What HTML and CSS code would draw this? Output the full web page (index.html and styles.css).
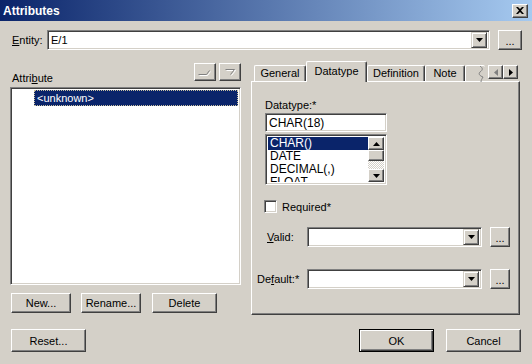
FILE: index.html
```html
<!DOCTYPE html>
<html lang="en">
<head>
<meta charset="UTF-8">
<title>Attributes</title>
<link rel="stylesheet" href="styles.css">
</head>
<body>
<div class="window">
  <div class="titlebar">
    <span class="title">Attributes</span>
    <span class="close-btn">
      <svg width="8" height="7" viewBox="0 0 8 7"><path d="M0 0h2l2 2 2-2h2L5 3.5 8 7H6L4 5 2 7H0l3-3.5z" fill="#000"/></svg>
    </span>
  </div>

  <div class="content">
    <div class="entity-row">
      <label class="lbl entity-lbl"><u>E</u>ntity:</label>
      <div class="field combo grow">
        <span class="combo-text">E/1</span>
        <span class="drop-btn"><svg width="7" height="4" viewBox="0 0 7 4"><path d="M0 0h7L3.5 4z" fill="#000"/></svg></span>
      </div>
      <button class="btn dots entity-dots">...</button>
    </div>

    <div class="main">
      <div class="left-col">
        <div class="attr-head">
          <span class="lbl attr-lbl">Attri<u>b</u>ute</span>
          <div class="move-btns">
            <span class="btn move-btn">
              <svg width="14" height="9" viewBox="0 0 14 9"><path d="M1.5 7.5h8l3-4" stroke="#fff" fill="none"/><path d="M0.5 6.5h8l3-4" stroke="#808080" fill="none"/></svg>
            </span>
            <span class="btn move-btn">
              <svg width="14" height="9" viewBox="0 0 14 9"><path d="M3.5 2.5h9l-4 5" stroke="#fff" fill="none"/><path d="M2.5 1.5h9l-4 5" stroke="#808080" fill="none"/></svg>
            </span>
          </div>
        </div>
        <div class="field attr-list">
          <div class="attr-item selected">&lt;unknown&gt;</div>
        </div>
        <div class="btn-row">
          <button class="btn btn-new">New...</button>
          <button class="btn btn-rename">Rename...</button>
          <button class="btn btn-delete">Delete</button>
        </div>
      </div>

      <div class="right-col">
        <div class="tabs">
          <span class="tab tab-general">General</span>
          <span class="tab tab-datatype active">Datatype</span>
          <span class="tab tab-definition">Definition</span>
          <span class="tab tab-note">Note</span>
          <span class="tab tab-torn">
            <svg width="8" height="16" viewBox="0 0 8 16"><path d="M3 0c3 2 3 4 0 6 -2 2 0 4 3 5 -1 2 -2 3 -2 5" stroke="#808080" fill="none"/></svg>
          </span>
          <div class="tab-scroll">
            <span class="btn scroll-btn"><svg width="4" height="7" viewBox="0 0 4 7"><path d="M4 0v7L0 3.5z" fill="#808080"/></svg></span>
            <span class="btn scroll-btn"><svg width="4" height="7" viewBox="0 0 4 7"><path d="M0 0v7l4-3.5z" fill="#000"/></svg></span>
          </div>
        </div>

        <div class="panel">
          <div class="dt-section">
            <div class="lbl dt-lbl">Datatype:*</div>
            <div class="field dt-input">CHAR(18)</div>
            <div class="field dt-list">
              <div class="dt-items">
                <div class="dt-item selected">CHAR()</div>
                <div class="dt-item">DATE</div>
                <div class="dt-item">DECIMAL(,)</div>
                <div class="dt-item">FLOAT</div>
              </div>
              <div class="vscroll">
                <span class="btn sb-btn"><svg width="7" height="4" viewBox="0 0 7 4"><path d="M0 4h7L3.5 0z" fill="#000"/></svg></span>
                <span class="btn sb-thumb"></span>
                <span class="sb-track"></span>
                <span class="btn sb-btn"><svg width="7" height="4" viewBox="0 0 7 4"><path d="M0 0h7L3.5 4z" fill="#000"/></svg></span>
              </div>
            </div>
          </div>

          <div class="check-row">
            <span class="field checkbox"></span>
            <span class="lbl">Required*</span>
          </div>

          <div class="form-row valid-row">
            <label class="lbl row-lbl valid-lbl"><u>V</u>alid:</label>
            <div class="field combo row-combo">
              <span class="drop-btn"><svg width="7" height="4" viewBox="0 0 7 4"><path d="M0 0h7L3.5 4z" fill="#000"/></svg></span>
            </div>
            <button class="btn dots row-dots">...</button>
          </div>

          <div class="form-row default-row">
            <label class="lbl row-lbl">De<u>f</u>ault:*</label>
            <div class="field combo row-combo">
              <span class="drop-btn"><svg width="7" height="4" viewBox="0 0 7 4"><path d="M0 0h7L3.5 4z" fill="#000"/></svg></span>
            </div>
            <button class="btn dots row-dots">...</button>
          </div>
        </div>
      </div>
    </div>

    <div class="footer">
      <button class="btn btn-reset">Reset...</button>
      <button class="btn btn-ok">OK</button>
      <button class="btn btn-cancel">Cancel</button>
    </div>
  </div>
</div>
</body>
</html>
```

FILE: styles.css
```css
* {
  box-sizing: border-box;
}
body {
  margin: 0;
  background-color: #d4d0c8;
  font-family: "Liberation Sans", Arial, sans-serif;
  font-size: 11px;
  color: #000000;
}
.window {
  width: 532px;
  height: 364px;
  display: flex;
  flex-direction: column;
}

/* title bar */
.titlebar {
  height: 21px;
  background: linear-gradient(to right, #0a246a, #a6caf0);
  display: flex;
  align-items: center;
  padding: 0 4px 0 3px;
}
.title {
  flex: 1;
  color: #ffffff;
  font-weight: bold;
  font-size: 12px;
}
.close-btn {
  width: 16px;
  height: 14px;
  background-color: #d4d0c8;
  border: 1px solid;
  border-color: #ffffff #404040 #404040 #ffffff;
  box-shadow: inset -1px -1px #808080;
  display: flex;
  align-items: center;
  justify-content: center;
}

.content {
  flex: 1;
  display: flex;
  flex-direction: column;
  padding: 9px 10px 0 10px;
}

/* shared controls */
.lbl {
  line-height: 14px;
  white-space: nowrap;
}
.field {
  background-color: #ffffff;
  border: 1px solid;
  border-color: #808080 #ffffff #ffffff #808080;
  box-shadow: inset 1px 1px #404040, inset -1px -1px #d4d0c8;
}
.btn {
  font-family: inherit;
  font-size: 11px;
  color: #000000;
  background-color: #d4d0c8;
  border: 1px solid;
  border-color: #ffffff #404040 #404040 #ffffff;
  box-shadow: inset -1px -1px #808080;
  padding: 0;
  display: flex;
  align-items: center;
  justify-content: center;
}
.combo {
  height: 20px;
  display: flex;
  align-items: center;
  padding: 2px;
}
.combo-text {
  flex: 1;
  padding-left: 1px;
}
.drop-btn {
  width: 16px;
  height: 16px;
  margin-left: auto;
  background-color: #d4d0c8;
  border: 1px solid;
  border-color: #d4d0c8 #404040 #404040 #d4d0c8;
  box-shadow: inset 1px 1px #ffffff, inset -1px -1px #808080;
  display: flex;
  align-items: center;
  justify-content: center;
}
.dots {
  height: 20px;
  align-items: flex-end;
  padding-bottom: 4px;
  line-height: 8px;
}

/* entity row */
.entity-row {
  display: flex;
  align-items: center;
  height: 20px;
}
.entity-lbl {
  width: 35px;
  margin-left: 2px;
}
.grow {
  flex: 1;
}
.entity-dots {
  width: 24px;
  margin-left: 8px;
}

/* main area */
.main {
  display: flex;
  gap: 10px;
  margin-top: 11px;
}
.left-col {
  width: 231px;
}
.attr-head {
  height: 20px;
  display: flex;
  align-items: flex-end;
  margin-bottom: 6px;
}
.attr-lbl {
  padding-left: 2px;
  margin-bottom: -4px;
}
.move-btns {
  margin-left: auto;
  display: flex;
  gap: 3px;
}
.move-btn {
  width: 22px;
  height: 18px;
}
.attr-list {
  height: 198px;
  padding: 2px 2px 0 2px;
}
.attr-item {
  height: 16px;
  line-height: 14px;
  margin-left: 21px;
  padding-left: 2px;
}
.attr-item.selected {
  background-color: #0a246a;
  color: #ffffff;
  border: 1px dotted #c8c0a0;
}
.btn-row {
  display: flex;
  margin-top: 8px;
}
.btn-row .btn {
  height: 20px;
}
.btn-new {
  width: 60px;
  margin-left: 1px;
}
.btn-rename {
  width: 60px;
  margin-left: 10px;
}
.btn-delete {
  width: 65px;
  margin-left: 11px;
}

/* tabs */
.right-col {
  width: 269px;
}
.tabs {
  height: 20px;
  display: flex;
  align-items: flex-end;
  padding-left: 3px;
}
.tab {
  height: 16px;
  line-height: 15px;
  text-align: center;
  border: 1px solid;
  border-bottom: none;
  border-color: #ffffff #404040 #404040 #ffffff;
  box-shadow: inset -1px 0 #808080;
  border-radius: 2px 2px 0 0;
}
.tab-general {
  width: 52px;
}
.tab-datatype {
  width: 61px;
}
.tab-definition {
  width: 58px;
}
.tab-note {
  width: 40px;
}
.tab-torn {
  width: 20px;
  border-right: none;
  box-shadow: none;
  display: flex;
  justify-content: flex-end;
}
.tab.active {
  position: relative;
  height: 21px;
  line-height: 19px;
  margin-bottom: -1px;
  background-color: #d4d0c8;
  z-index: 1;
}
.tab-scroll {
  display: flex;
  margin-left: auto;
  margin-right: 2px;
  margin-bottom: 2px;
}
.scroll-btn {
  width: 15px;
  height: 14px;
}

/* panel */
.panel {
  height: 234px;
  border: 1px solid;
  border-color: #ffffff #404040 #404040 #ffffff;
  box-shadow: inset -1px -1px #808080;
  padding: 16px 0 0 5px;
}
.dt-section {
  padding-left: 8px;
}
.dt-input {
  width: 122px;
  height: 19px;
  margin-top: 1px;
  padding: 2px 3px;
  line-height: 14px;
  font-size: 12px;
}
.dt-list {
  width: 122px;
  height: 51px;
  margin-top: 2px;
  padding: 2px;
  display: flex;
  overflow: hidden;
}
.dt-items {
  flex: 1;
  overflow: hidden;
  font-size: 12px;
}
.dt-item {
  height: 13px;
  line-height: 13px;
  padding-left: 2px;
}
.dt-item.selected {
  background-color: #0a246a;
  color: #ffffff;
}
.vscroll {
  width: 16px;
  display: flex;
  flex-direction: column;
}
.sb-btn {
  height: 13px;
}
.sb-thumb {
  height: 11px;
}
.sb-track {
  flex: 1;
  background: repeating-conic-gradient(#ffffff 0 25%, #d4d0c8 0 50%) 0 0 / 2px 2px;
}

.check-row {
  display: flex;
  align-items: center;
  height: 15px;
  margin-top: 14px;
  padding-left: 7px;
}
.checkbox {
  width: 13px;
  height: 13px;
  margin-right: 5px;
}

.form-row {
  display: flex;
  align-items: center;
  height: 20px;
}
.valid-row {
  margin-top: 13px;
}
.default-row {
  margin-top: 22px;
}
.row-lbl {
  width: 50px;
}
.valid-lbl {
  padding-left: 10px;
}
.row-combo {
  width: 175px;
}
.row-dots {
  width: 20px;
  margin-left: 8px;
}

/* footer */
.footer {
  display: flex;
  margin-top: 14px;
}
.footer .btn {
  width: 75px;
  height: 23px;
}
.btn-reset {
  margin-left: 1px;
}
.btn-ok {
  margin-left: auto;
  border: 1px solid #000000;
  box-shadow: inset 1px 1px #ffffff, inset -1px -1px #404040, inset -2px -2px #808080;
}
.btn-cancel {
  margin-left: 12px;
  margin-right: 1px;
}
```
